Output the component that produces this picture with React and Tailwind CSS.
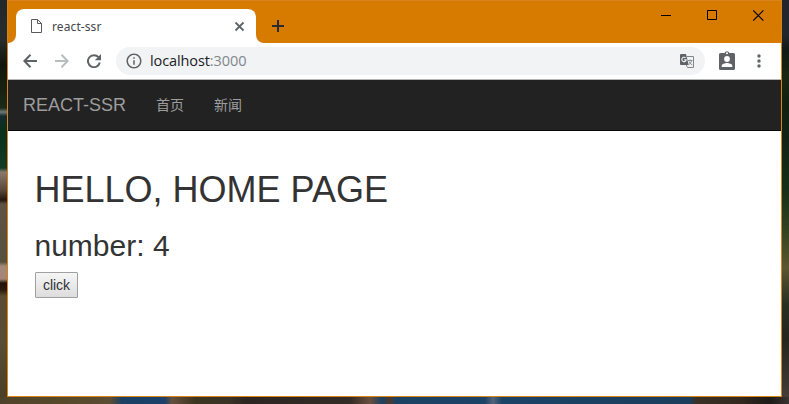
import { MdInfoOutline } from "react-icons/md";

function Tab() {
  return (
    <div className="flex h-[34px] items-end">
      <svg className="size-2 shrink-0" viewBox="0 0 8 8" fill="#fff">
        <path d="M8 0v8H0a8 8 0 0 0 8-8z" />
      </svg>
      <div className="flex h-[34px] w-[240px] items-center rounded-t-lg bg-white pr-[11px] pl-[15px]">
        <svg className="h-[14px] w-[11px] shrink-0" viewBox="0 0 11 14" fill="none" stroke="#5a5a5a">
          <path d="M.5.5h6l4 4v9H.5zM6.5.5v4h4" />
        </svg>
        <span className="mt-[2px] ml-[10px] flex-1 font-['Noto_Sans',sans-serif] text-[12px] leading-4 tracking-[0.100px] text-[#45474a]">
          react-ssr
        </span>
        <svg className="size-[11px]" viewBox="0 0 11 11" stroke="#5f6368" strokeWidth="1.800">
          <path d="M1.500 1.500l8 8M9.500 1.500l-8 8" />
        </svg>
      </div>
      <svg className="size-2 shrink-0" viewBox="0 0 8 8" fill="#fff">
        <path d="M0 0v8h8a8 8 0 0 1-8-8z" />
      </svg>
    </div>
  );
}

function TitleBar() {
  return (
    <div className="flex h-[43px] shrink-0 items-start border-t border-[#d8841c] bg-[#d77a00]">
      <div className="flex h-[42px] items-end">
        <Tab />
      </div>
      <svg className="mt-[19px] ml-[8px] size-3" viewBox="0 0 12 12" stroke="#2b2b2b" strokeWidth="2">
        <path d="M6 0v12M0 6h12" />
      </svg>
      <div className="mt-[9px] mr-[17px] ml-auto flex gap-[35px]">
        <svg className="size-[11px]" viewBox="0 0 11 11" stroke="#000">
          <path d="M0 5.500h10" />
        </svg>
        <svg className="size-[11px]" viewBox="0 0 11 11" fill="none" stroke="#000">
          <path d="M.5.5h9v9h-9z" />
        </svg>
        <svg className="size-[11px]" viewBox="0 0 11 11" stroke="#000" strokeWidth="1.100">
          <path d="M.2.4l10.200 10.200M10.400.4L.2 10.600" />
        </svg>
      </div>
    </div>
  );
}

function BackIcon() {
  return (
    <svg className="size-[14px]" viewBox="0 0 14 14" fill="none" stroke="#5f6368" strokeWidth="2">
      <path d="M14 7H2M7.500 .8L1.400 7l6.100 6.200" />
    </svg>
  );
}

function ForwardIcon() {
  return (
    <svg className="size-[14px]" viewBox="0 0 14 14" fill="none" stroke="#babcbe" strokeWidth="2">
      <path d="M0 7h12M6.500 .8L12.600 7l-6.100 6.200" />
    </svg>
  );
}

function ReloadIcon() {
  return (
    <svg className="size-[14px]" viewBox="0 0 14 14" fill="none">
      <path d="M11.500 3.200A6 6 0 1 0 12.800 8.600" stroke="#5f6368" strokeWidth="2" />
      <path d="M14 0v6.200H7.800z" fill="#5f6368" />
    </svg>
  );
}

function TranslateIcon() {
  return (
    <svg className="h-[14px] w-[14px]" viewBox="0 0 14 14" fill="none">
      <path d="M7 2.500h6.500v11H7.500L6 10.500" stroke="#80868b" />
      <path d="M8 6.500h4.500M10.200 5.500v1M11.600 6.500c-.4 2-1.600 3.400-3 4.200M9 7.500c.6 1.400 1.700 2.500 3.200 3.500" stroke="#80868b" strokeWidth=".9" />
      <path d="M1 0h5l2.700 11H1a1 1 0 0 1-1-1V1a1 1 0 0 1 1-1z" fill="#5f6368" />
      <path d="M5.600 3.900a2.200 2.200 0 1 0 .6 2H4.200" stroke="#f1f3f4" strokeWidth="1.100" />
    </svg>
  );
}

function ProfileIcon() {
  return (
    <svg className="mb-px h-[19px] w-4" viewBox="0 0 16 19">
      <path d="M1.500 2h4.100a2.500 2.500 0 0 1 4.800 0h4.100A1.500 1.500 0 0 1 16 3.500v14a1.500 1.500 0 0 1-1.500 1.500h-13A1.500 1.500 0 0 1 0 17.500v-14A1.500 1.500 0 0 1 1.500 2z" fill="#5f6368" />
      <circle cx="8" cy="2.200" r="1" fill="#fff" />
      <circle cx="8" cy="8" r="2.900" fill="#fff" />
      <path d="M2.700 16v-1.200c0-2 3.500-2.900 5.300-2.900s5.300.9 5.300 2.900V16z" fill="#fff" />
    </svg>
  );
}

function MenuIcon() {
  return (
    <svg className="h-[14px] w-[4px]" viewBox="0 0 4 14" fill="#5f6368">
      <circle cx="2" cy="2" r="1.700" />
      <circle cx="2" cy="7" r="1.700" />
      <circle cx="2" cy="12" r="1.700" />
    </svg>
  );
}

function Toolbar() {
  return (
    <div className="flex h-[37px] shrink-0 items-center border-b border-[#b6b6b6] bg-white text-[#5f6368]">
      <div className="ml-[15px] flex gap-[18px]">
        <BackIcon />
        <ForwardIcon />
        <ReloadIcon />
      </div>
      <div className="ml-[15px] flex h-7 w-[589px] items-center rounded-full bg-[#f1f3f4] pr-[11px] pl-[9px]">
        <MdInfoOutline className="size-[18px]" />
        <span className="ml-[7px] flex-1 font-['Open_Sans',sans-serif] text-[14.500px] leading-5 tracking-[-0.100px] text-[#202124]">
          localhost<span className="text-[#80868b]">:3000</span>
        </span>
        <TranslateIcon />
      </div>
      <div className="ml-[14px] flex items-center gap-[22px]">
        <ProfileIcon />
        <MenuIcon />
      </div>
    </div>
  );
}

function NavBar() {
  return (
    <nav className="flex h-[51px] shrink-0 items-center border-b border-[#080808] bg-[#222] pl-[15px] text-[#9d9d9d]">
      <a className="font-['Liberation_Sans',sans-serif] text-[18px] leading-5">REACT-SSR</a>
      <ul className="ml-[30px] flex gap-[30px] font-['Liberation_Sans','Noto_Sans_CJK_SC',sans-serif] text-[14px] leading-5">
        <li>首页</li>
        <li>新闻</li>
      </ul>
    </nav>
  );
}

export default function App() {
  return (
    <div className="flex h-[404px] w-[789px] flex-col overflow-hidden">
      <div className="flex h-[397px]">
        <div className="w-[7px] bg-[linear-gradient(#24282c_0px,#282c2c_40px,#11160c_65px,#1c2a18_108px,#707a7a_112px,#142c30_116px,#08301c_130px,#123c28_168px,#8a7a6c_172px,#5a483c_190px,#241710_200px,#5e5344_204px,#57503f_262px,#a38878_266px,#a58677_279px,#20120b_283px,#2b1a10_290px,#5a4b32_296px,#594d36_340px,#4b3f25_397px)]" />
        <main className="flex w-[775px] flex-col border-x border-b border-[#d98416] bg-white">
          <TitleBar />
          <Toolbar />
          <NavBar />
          <div className="flex flex-col items-start pt-[39px] pl-[26.500px] font-['Liberation_Sans',sans-serif] text-[#333]">
            <h1 className="text-[36px] leading-10">HELLO, HOME PAGE</h1>
            <h2 className="mt-[19px] text-[30px] leading-[33px]">number: 4</h2>
            <button className="mt-[10px] ml-[0.500px] h-[26px] w-[43px] rounded-[1px] border border-[#a0a0a0] bg-linear-to-b from-[#f6f6f6] to-[#dddddd] text-[14px] leading-5">
              click
            </button>
          </div>
        </main>
        <div className="w-[7px] bg-[linear-gradient(#25262d_0px,#24262d_35px,#111a14_50px,#1b2612_75px,#12200f_105px,#122316_140px,#153017_190px,#34411f_230px,#5b5630_268px,#273021_305px,#25251e_340px,#453c36_397px)]" />
      </div>
      <div className="h-[7px] bg-[linear-gradient(90deg,#50432b_0px,#564829_60px,#5c4c33_110px,#1b4064_122px,#1c416a_165px,#66503e_172px,#3c3521_195px,#3a3226_230px,#2d2521_245px,#332b26_350px,#6a4e3e_370px,#1c4061_382px,#4a3a30_390px,#1c4263_396px,#1b4366_485px,#53637a_493px,#1b4366_502px,#1b3e5c_690px,#3b3026_696px,#33291f_740px,#1d1a18_770px,#3a3430_789px)]" />
    </div>
  );
}
